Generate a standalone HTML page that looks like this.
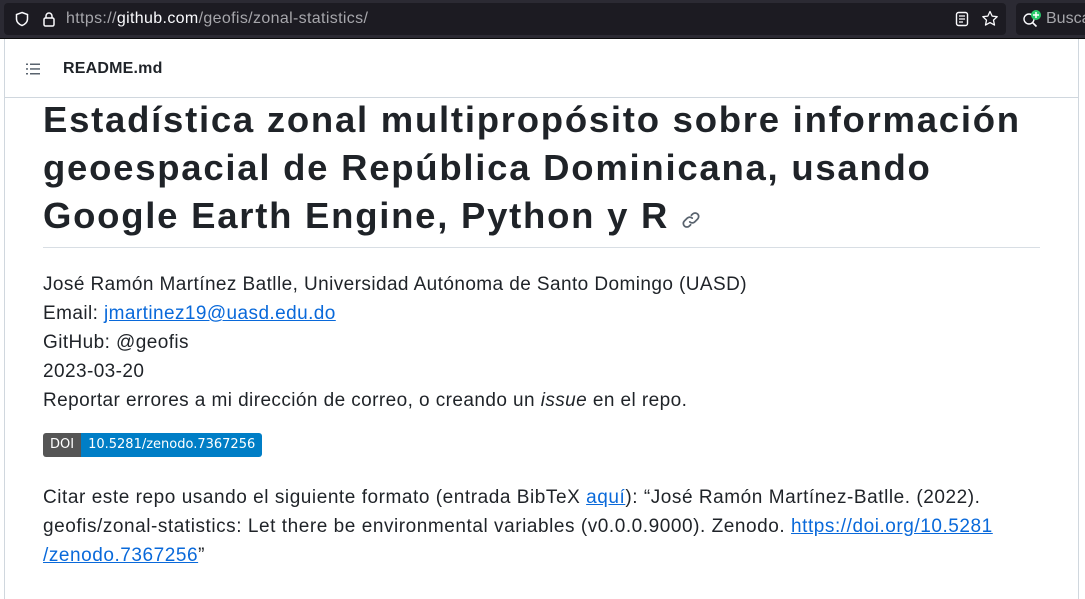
<!DOCTYPE html>
<html><head><meta charset="utf-8"><style>
*{margin:0;padding:0;box-sizing:border-box}
body{width:1085px;height:590px;overflow:hidden;background:#fff;font-family:"Liberation Sans",sans-serif;color:#1f2328;position:relative}
.bar{position:absolute;left:0;top:0;width:1085px;height:39px;background:#2b2a33;border-bottom:1px solid #0c0c0d}
.url{position:absolute;left:4px;top:3px;width:1002px;height:32px;background:#1c1b22;border-radius:4px}
.url span{position:absolute;left:62px;top:7px;font-size:16px;color:#a6a6ab;letter-spacing:0.35px}
.url b{font-weight:normal;color:#fbfbfe}
.srch{position:absolute;left:1016px;top:3px;width:80px;height:32px;background:#1c1b22;border-radius:4px;color:#a6a6ab;font-size:16px}
.page{position:absolute;left:4px;top:39px;width:1075px;height:560px;border-left:1px solid #d0d7de;border-right:1px solid #d0d7de}
.hdr{position:absolute;left:0;top:0;width:1073px;height:59px;border-bottom:1px solid #d0d7de}
.hdr .t{position:absolute;left:58px;top:21px;font-size:16px;font-weight:bold;letter-spacing:0.2px}
h1{position:absolute;left:43px;top:96px;width:1040px;white-space:nowrap;font-size:36.5px;line-height:48px;font-weight:bold;letter-spacing:1.75px}
.hr{position:absolute;left:43px;top:247px;width:997px;height:1px;background:#d8dee4}
.p{position:absolute;left:43px;font-size:19px;line-height:29px;letter-spacing:0.42px;white-space:nowrap}
a{color:#0969da;text-decoration:underline}
.badge{position:absolute;left:43px;top:433px;height:24px;font-family:"DejaVu Sans",sans-serif;font-size:13px;color:#fff;display:flex;border-radius:3px;overflow:hidden}
.badge .l{background:#555;padding:4px 7px 0}
.badge .r{background:#007ec6;padding:4px 7px 0}
</style></head><body>
<div class="bar">
<div class="url">
<svg style="position:absolute;left:10px;top:8px" width="16" height="16" viewBox="0 0 16 16"><path d="M8 1.5 L13.5 3.5 V8 C13.5 11 11 13.5 8 14.5 C5 13.5 2.5 11 2.5 8 V3.5 Z" fill="none" stroke="#fbfbfe" stroke-width="1.5"/></svg>
<svg style="position:absolute;left:38px;top:8px" width="14" height="16" viewBox="0 0 14 16"><rect x="2" y="7" width="10" height="8" rx="1.5" fill="none" stroke="#fbfbfe" stroke-width="1.5"/><path d="M4 7V5a3 3 0 0 1 6 0v2" fill="none" stroke="#fbfbfe" stroke-width="1.5"/></svg>
<span>https://<b>github.com</b>/geofis/zonal-statistics/</span>
<svg style="position:absolute;left:951px;top:8px" width="14" height="16" viewBox="0 0 14 16"><rect x="1.5" y="1.5" width="11" height="13" rx="2" fill="none" stroke="#fbfbfe" stroke-width="1.4"/><path d="M4 5h6M4 8h6M4 11h4" stroke="#fbfbfe" stroke-width="1.3"/></svg>
<svg style="position:absolute;left:977px;top:7px" width="18" height="18" viewBox="0 0 18 18"><path d="M9 1.5l2.2 4.6 5 .6-3.7 3.4 1 5-4.5-2.5-4.5 2.5 1-5L1.8 6.7l5-.6z" fill="none" stroke="#fbfbfe" stroke-width="1.3" stroke-linejoin="round"/></svg>
</div>
<div class="srch"><svg style="position:absolute;left:6px;top:6px" width="22" height="22" viewBox="0 0 22 22"><circle cx="7" cy="10" r="5" fill="none" stroke="#fbfbfe" stroke-width="1.4"/><path d="M10.5 13.5l4 4" stroke="#fbfbfe" stroke-width="1.6"/><circle cx="14" cy="6" r="5" fill="#2ac86b"/><path d="M14 3v6M11 6h6" stroke="#fff" stroke-width="1.5"/></svg><span style="position:absolute;left:30px;top:7px">Busca</span></div>
</div>
<div class="page">
<div class="hdr">
<svg style="position:absolute;left:20px;top:22px" width="16" height="16" viewBox="0 0 16 16" fill="#59636e"><rect x="1" y="2.5" width="2" height="1.5"/><rect x="1" y="7.2" width="2" height="1.5"/><rect x="1" y="12" width="2" height="1.5"/><rect x="5" y="2.5" width="10" height="1.5"/><rect x="5" y="7.2" width="10" height="1.5"/><rect x="5" y="12" width="10" height="1.5"/></svg>
<div class="t">README.md</div>
</div>
</div>
<h1>Estadística zonal multipropósito sobre información<br>geoespacial de República Dominicana, usando<br>Google Earth Engine, Python y R <svg width="20" height="20" viewBox="0 0 16 16" style="vertical-align:-2px"><path d="M7 9.5a2.8 2.8 0 0 0 4 0l2.3-2.3a2.8 2.8 0 0 0-4-4l-1 1M9 6.5a2.8 2.8 0 0 0-4 0L2.7 8.8a2.8 2.8 0 0 0 4 4l1-1" fill="none" stroke="#59636e" stroke-width="1.4" stroke-linecap="round"/></svg></h1>
<div class="hr"></div>
<div class="p" style="top:270px">José Ramón Martínez Batlle, Universidad Autónoma de Santo Domingo (UASD)<br>Email: <a>jmartinez19@uasd.edu.do</a><br>GitHub: @geofis<br>2023-03-20<br>Reportar errores a mi dirección de correo, o creando un <i>issue</i> en el repo.</div>
<div class="badge"><div class="l">DOI</div><div class="r">10.5281/zenodo.7367256</div></div>
<div class="p" style="top:483px;letter-spacing:0.55px">Citar este repo usando el siguiente formato (entrada BibTeX <a>aquí</a>): “José Ramón Martínez-Batlle. (2022).<br>geofis/zonal-statistics: Let there be environmental variables (v0.0.0.9000). Zenodo. <a>https://doi.org/10.5281<br>/zenodo.7367256</a>”</div>
</body></html>
